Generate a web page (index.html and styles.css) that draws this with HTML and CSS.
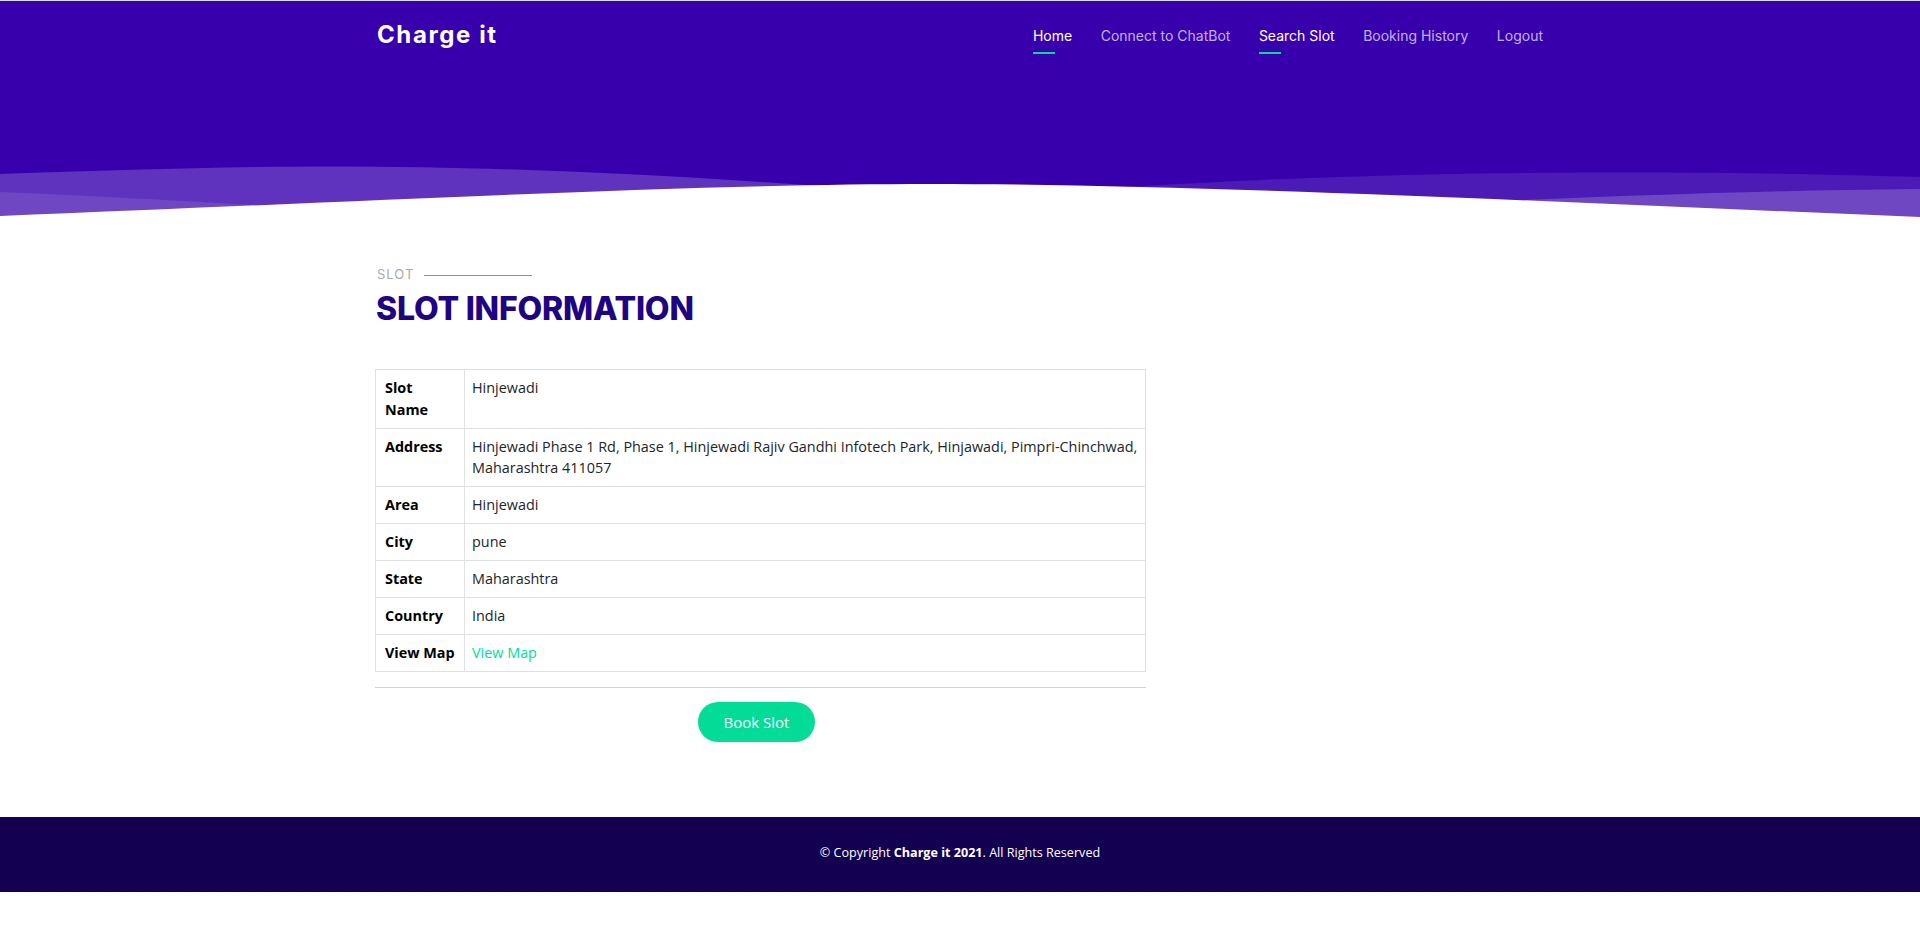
FILE: index.html
```html
<!DOCTYPE html>
<html lang="en">
<head>
<meta charset="utf-8">
<title>Charge it - Slot Information</title>
<link rel="stylesheet" href="styles.css">
</head>
<body>
<section class="hero">
  <header class="header">
    <div class="container header-inner">
      <a class="logo" href="#">Charge it</a>
      <nav class="nav">
        <a class="nav-link active" href="#">Home</a>
        <a class="nav-link" href="#">Connect to ChatBot</a>
        <a class="nav-link active" href="#">Search Slot</a>
        <a class="nav-link" href="#">Booking History</a>
        <a class="nav-link" href="#">Logout</a>
      </nav>
    </div>
  </header>
  <svg class="waves" viewBox="0 160 1920 70" preserveAspectRatio="none" aria-hidden="true">
    <path fill="#fff" fill-opacity="0.2" d="M0,174 C120,170 230,166.5 330,166.5 C700,166.5 1000,205 1150,210 C1400,210 1600,192 1920,189 L1920,230 L0,230 Z"/>
    <path fill="#fff" fill-opacity="0.1" d="M0,192 C100,196 200,202 300,208 C600,225 900,200 1144,186 C1350,174 1500,172.5 1634,172.5 C1750,172.5 1850,175 1920,177 L1920,230 L0,230 Z"/>
    <path fill="#fff" d="M0,216 C400,200 700,184 930,184 C1200,184 1600,204 1920,217 L1920,230 L0,230 Z"/>
  </svg>
</section>

<main class="slot-section">
  <div class="container">
    <div class="col-main">
      <div class="section-title">
        <p class="eyebrow">Slot</p>
        <h2 class="title">Slot Information</h2>
      </div>
      <table class="info-table">
        <colgroup><col class="col-label"><col></colgroup>
        <tbody>
          <tr><th>Slot Name</th><td>Hinjewadi</td></tr>
          <tr><th>Address</th><td>Hinjewadi Phase 1 Rd, Phase 1, Hinjewadi Rajiv Gandhi Infotech Park, Hinjawadi, Pimpri-Chinchwad, Maharashtra 411057</td></tr>
          <tr><th>Area</th><td>Hinjewadi</td></tr>
          <tr><th>City</th><td>pune</td></tr>
          <tr><th>State</th><td>Maharashtra</td></tr>
          <tr><th>Country</th><td>India</td></tr>
          <tr><th class="nowrap">View Map</th><td><a class="map-link" href="#">View Map</a></td></tr>
        </tbody>
      </table>
      <hr class="divider">
      <div class="actions">
        <button class="btn-book" type="button">Book Slot</button>
      </div>
    </div>
  </div>
</main>

<footer class="footer">
  <div class="copyright">&copy; Copyright <strong>Charge it 2021</strong>. All Rights Reserved</div>
</footer>
</body>
</html>
```

FILE: styles.css
```css
* { box-sizing: border-box; }

body {
  margin: 0;
  font-family: "Open Sans", "Liberation Sans", sans-serif;
  color: #212529;
  background: #fff;
}

a { text-decoration: none; }

.container {
  width: 1200px;
  margin: 0 auto;
  padding: 0 15px;
}

/* ---------- hero / header ---------- */
.hero {
  height: 230px;
  background: #3800ad;
  border-top: 1px solid #dcdcdc;
  display: flex;
  flex-direction: column;
}

.header-inner {
  display: flex;
  justify-content: space-between;
  align-items: flex-start;
  padding-top: 22px;
}

.logo {
  font-family: "Inter", "Noto Sans", sans-serif;
  font-weight: 700;
  font-size: 24px;
  line-height: 24px;
  letter-spacing: 1.6px;
  color: #fff;
  margin-left: 2px;
}

.nav {
  display: flex;
  gap: 28.5px;
  margin-top: 3px;
  padding-right: 2px;
}

.nav-link {
  position: relative;
  display: block;
  font-family: "Inter", "Noto Sans", sans-serif;
  font-size: 14px;
  line-height: 20px;
  padding-bottom: 8px;
  color: rgba(255, 255, 255, 0.7);
}

.nav-link.active { color: #fff; }

.nav-link.active::after {
  content: "";
  position: absolute;
  left: 0;
  bottom: 0;
  width: 22px;
  height: 2px;
  background: #03dc97;
}

.waves {
  display: block;
  width: 100%;
  height: 70px;
  margin-top: auto;
}

/* ---------- slot section ---------- */
.slot-section {
  padding: 35px 0 75px;
}

.col-main {
  width: 771px;
}

.eyebrow {
  margin: 0;
  font-family: "Inter", "Noto Sans", sans-serif;
  font-size: 13px;
  line-height: 18px;
  letter-spacing: 1px;
  text-transform: uppercase;
  color: #aaaaaa;
  padding-left: 2px;
}

.eyebrow::after {
  content: "";
  display: inline-block;
  width: 108px;
  height: 1px;
  background: #03dc97;
  margin-left: 10px;
  vertical-align: middle;
}

.title {
  margin: 7px 0 0;
  font-family: "Inter", "Noto Sans", sans-serif;
  font-size: 32px;
  line-height: 38px;
  font-weight: 800;
  letter-spacing: -0.2px;
  text-transform: uppercase;
  color: #1e0383;
  padding-left: 1px;
}

.info-table {
  width: 100%;
  margin-top: 41px;
  border-collapse: collapse;
  table-layout: fixed;
  font-size: 14.4px;
  line-height: 21.6px;
}

.col-label { width: 89px; }

.info-table th,
.info-table td {
  border: 1px solid #dee2e6;
  padding: 7.2px 7px;
  vertical-align: top;
  text-align: left;
}

.info-table th {
  font-weight: 700;
  color: #000;
  padding-left: 9px;
}

.info-table td { color: #212529; }

.nowrap { white-space: nowrap; }

.map-link { color: #03dc97; }

.divider {
  margin: 15px 0 0;
  border: 0;
  border-top: 1px solid #d2d2d2;
}

.actions {
  text-align: center;
  padding-right: 8px;
  margin-top: 14px;
}

.btn-book {
  font-family: "Open Sans", "Liberation Sans", sans-serif;
  font-size: 15px;
  line-height: 24px;
  padding: 8px 25.5px;
  border: 0;
  border-radius: 50px;
  background: #03dc97;
  color: #fff;
}

/* ---------- footer ---------- */
.footer {
  background: #130050;
  color: #fff;
  padding: 26px 0 29px;
  text-align: center;
  font-size: 12.6px;
  line-height: 20px;
}
```
